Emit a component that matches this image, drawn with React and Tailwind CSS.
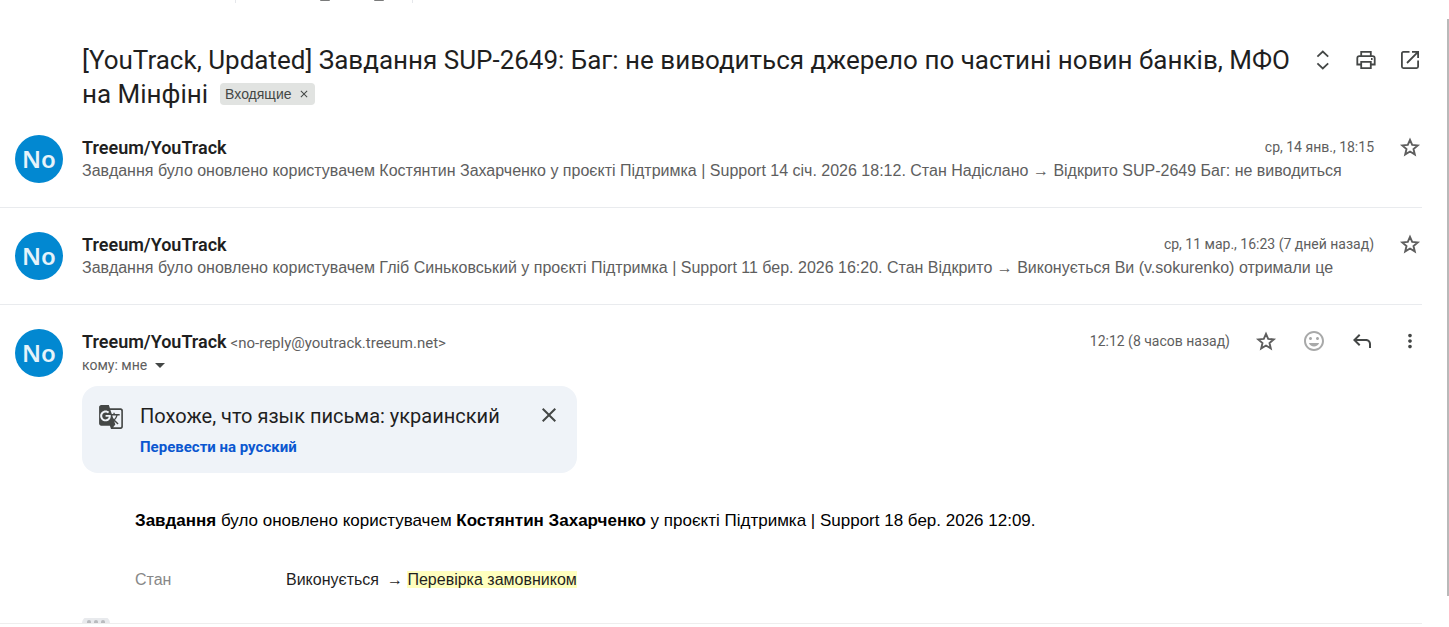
import {
  MdClose,
  MdGTranslate,
  MdInsertEmoticon,
  MdMoreVert,
} from 'react-icons/md'

const messages = [
  {
    id: 1,
    sender: 'Treeum/YouTrack',
    date: 'ср, 14 янв., 18:15',
    snippet:
      'Завдання було оновлено користувачем Костянтин Захарченко у проєкті Підтримка | Support 14 січ. 2026 18:12. Стан Надіслано → Відкрито SUP-2649 Баг: не виводиться',
  },
  {
    id: 2,
    sender: 'Treeum/YouTrack',
    date: 'ср, 11 мар., 16:23 (7 дней назад)',
    snippet:
      'Завдання було оновлено користувачем Гліб Синьковський у проєкті Підтримка | Support 11 бер. 2026 16:20. Стан Відкрито → Виконується Ви (v.sokurenko) отримали це',
  },
]

const UnfoldIcon = () => (
  <svg className="size-6" viewBox="0 0 24 24" fill="none" stroke="currentColor" strokeWidth="1.8">
    <path d="M7.4 8.6 12.8 3.6l5.4 5M7.4 15.4l5.4 5 5.4-5" />
  </svg>
)

const PrintIcon = () => (
  <svg className="size-6" viewBox="0 0 24 24" fill="none" stroke="currentColor" strokeWidth="1.8">
    <path d="M7.2 8.2V3.8h9.6v4.4M7 16.5H3.3v-6.2c0-1.2.8-2.1 2-2.1h13.4c1.2 0 2 .9 2 2.1v6.2H17" />
    <path d="M7.2 13.8h9.6v6.4H7.2z" />
    <path d="M17 11h1.6" />
  </svg>
)

const OpenIcon = () => (
  <svg className="size-6" viewBox="0 0 24 24" fill="none" stroke="currentColor" strokeWidth="1.8">
    <path d="M11.5 3.9H5.4c-.9 0-1.5.6-1.5 1.5v13.2c0 .9.6 1.5 1.5 1.5h13.2c.9 0 1.5-.6 1.5-1.5v-6.1" />
    <path d="M14 3.9h6.1V10M19.8 4.2 9 15" />
  </svg>
)

const StarIcon = () => (
  <svg className="size-6" viewBox="0 0 24 24" fill="none" stroke="currentColor" strokeWidth="1.9">
    <path d="m12 4.8 2.2 5.1 5.5.5-4.2 3.6 1.3 5.4-4.8-2.9-4.8 2.9L8.5 14l-4.2-3.6 5.5-.5z" />
  </svg>
)

const ReplyIcon = () => (
  <svg className="size-6" viewBox="0 0 24 24" fill="currentColor">
    <path d="M19 19v-4c0-1.7-1.3-3-3-3H6.8l3.6 3.6L9 17l-6-6 6-6 1.4 1.4L6.8 10H16c2.8 0 5 2.2 5 5v4z" />
  </svg>
)

const IconButton = ({ label, className = 'text-[#444746]', children }) => (
  <button
    type="button"
    aria-label={label}
    className={`flex size-6 shrink-0 items-center justify-center ${className}`}
  >
    {children}
  </button>
)

const Avatar = () => (
  <div className="flex size-12 shrink-0 items-center justify-center rounded-full bg-[#0288d1] font-['Noto_Sans',sans-serif] text-[24px] font-semibold text-[#e6f3fa]">
    No
  </div>
)

const Toolbar = () => (
  <div className="flex h-[3px] items-end overflow-hidden pl-[235px]" aria-hidden="true">
    <div className="flex h-full w-[178px] items-start gap-11 border-x border-gray-200 pl-[84px]">
      <span className="h-px w-2.5 rounded-b-full bg-[#7a7b7b]" />
      <span className="h-px w-2.5 rounded-b-full bg-[#7a7b7b]" />
    </div>
  </div>
)

const Subject = () => (
  <header className="flex items-start pt-10 pl-[82px]">
    <div className="min-w-0 flex-1 text-[26px] leading-[34px] text-[#1f1f1f]">
      <h1 className="inline">
        [YouTrack, Updated] Завдання SUP-2649: Баг: не виводиться джерело по частині новин банків, МФО на Мінфіні
      </h1>
      <span className="ml-3 inline-flex h-[22px] items-center gap-1.5 rounded bg-[#e1e3e1] px-[5px] align-[4px] font-['Liberation_Sans',sans-serif] text-[14px] leading-5 text-[#444746]">
        Входящие
        <button type="button" aria-label="Удалить ярлык">
          <MdClose className="size-3" />
        </button>
      </span>
    </div>
    <div className="ml-4 flex gap-5 pt-[5px]">
      <IconButton label="Развернуть все"><UnfoldIcon /></IconButton>
      <IconButton label="Напечатать все"><PrintIcon /></IconButton>
      <IconButton label="В новом окне"><OpenIcon /></IconButton>
    </div>
  </header>
)

const CollapsedMessage = ({ message }) => (
  <article className="flex gap-[19px] border-b border-[#e9ebee] pt-6 pb-6 pl-[15px]">
    <Avatar />
    <div className="min-w-0 flex-1">
      <div className="flex h-6 items-center">
        <h2 className="flex-1 text-[18px] font-semibold text-[#1f1f1f]">{message.sender}</h2>
        <time className="text-[14px] text-[#5e5e5e]">{message.date}</time>
        <IconButton label="Пометить" className="ml-6 text-[#5e5e5e]"><StarIcon /></IconButton>
      </div>
      <p className="truncate font-['Liberation_Sans',sans-serif] text-[16px] leading-6 text-[#5e5e5e]">
        {message.snippet}
      </p>
    </div>
  </article>
)

const TranslateBanner = () => (
  <section className="mt-[9px] flex h-[87px] w-[495px] max-w-full items-start rounded-2xl bg-[#eff3f8] px-4 pt-4">
    <MdGTranslate className="mt-0.5 size-[26px] text-[#444746]" />
    <div className="ml-4 flex-1">
      <p className="text-[20px] leading-7 text-[#1f1f1f]">Похоже, что язык письма: украинский</p>
      <a href="#translate" className="mt-[7px] block text-[15px] leading-5 font-bold text-[#0b57d0]">
        Перевести на русский
      </a>
    </div>
    <IconButton label="Закрыть" className="mt-px text-[#444746]"><MdClose className="size-6" /></IconButton>
  </section>
)

const OpenMessage = () => (
  <article className="flex gap-[19px] pt-6 pl-[15px]">
    <Avatar />
    <div className="min-w-0 flex-1">
      <div className="flex h-6 items-center">
        <div className="flex flex-1 items-baseline gap-1">
          <h2 className="text-[18px] font-semibold text-[#1f1f1f]">Treeum/YouTrack</h2>
          <span className="text-[15px] text-[#5e5e5e]">&lt;no-reply@youtrack.treeum.net&gt;</span>
        </div>
        <time className="text-[14px] text-[#5e5e5e]">12:12 (8 часов назад)</time>
        <div className="ml-6 flex gap-6">
          <IconButton label="Пометить" className="text-[#5e5e5e]"><StarIcon /></IconButton>
          <IconButton label="Добавить реакцию" className="text-[#a8a9a9]"><MdInsertEmoticon className="size-6" /></IconButton>
          <IconButton label="Ответить"><ReplyIcon /></IconButton>
          <IconButton label="Ещё"><MdMoreVert className="size-[22px]" /></IconButton>
        </div>
      </div>
      <button type="button" className="flex h-6 items-center gap-2 text-[14px] text-[#5e5e5e]">
        кому: мне
        <svg className="h-[5px] w-2.5" viewBox="0 0 10 5" fill="#444746"><path d="M0 0h10L5 5z" /></svg>
      </button>
      <TranslateBanner />
      <div className="pt-9 pl-[53px] font-['Liberation_Sans',sans-serif] text-[16px] leading-6 text-black">
        <p className="text-[17px] leading-6">
          <b>Завдання</b> було оновлено користувачем <b>Костянтин Захарченко</b> у проєкті Підтримка | Support 18 бер. 2026 12:09.
        </p>
        <table className="mt-[35px]">
          <tbody>
            <tr>
              <th scope="row" className="w-[151px] text-left font-normal text-[#888888]">Стан</th>
              <td className="text-[#1f1f1f]">
                <span className="mr-2">Виконується</span>
                {'→ '}
                <mark className="bg-[#ffffbe] text-[#1f1f1f]">Перевірка замовником</mark>
              </td>
            </tr>
          </tbody>
        </table>
      </div>
    </div>
  </article>
)

export default function App() {
  return (
    <div className="flex bg-white font-[Roboto,sans-serif]">
      <main className="min-w-0 flex-1 pr-[25px]">
        <Toolbar />
        <Subject />
        {messages.map((message) => (
          <CollapsedMessage key={message.id} message={message} />
        ))}
        <OpenMessage />
        <div className="mt-[26px] flex h-1.5 items-end overflow-hidden border-b border-[#eeeeee] pl-[82px]">
          <button
            type="button"
            aria-label="Показать скрытый текст"
            className="flex h-1.5 w-7 items-end justify-center gap-[3px] rounded-t-md bg-[#e8eaed]"
          >
            <span className="h-[3px] w-1 rounded-t-full bg-[#b9bbbe]" />
            <span className="h-[3px] w-1 rounded-t-full bg-[#b9bbbe]" />
            <span className="h-[3px] w-1 rounded-t-full bg-[#b9bbbe]" />
          </button>
        </div>
      </main>
      <div className="mt-[19px] mb-7 w-0.5 bg-[#b9b9b9]" />
    </div>
  )
}
